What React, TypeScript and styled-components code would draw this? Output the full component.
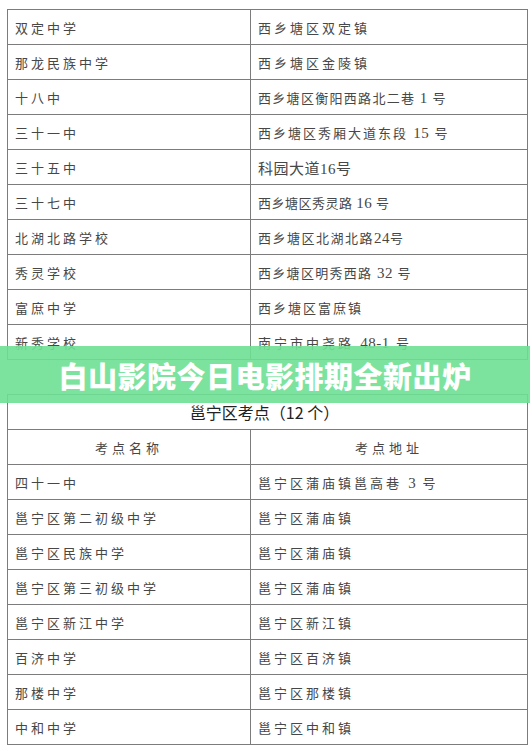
import React from 'react'
import styled, { createGlobalStyle } from 'styled-components'

const GlobalStyle = createGlobalStyle`
  html, body {
    margin: 0;
    padding: 0;
    background: #fff;
  }
`

type Row = { name: string; addr: string; sp?: number; size?: number }

const xixiangtang: Row[] = [
  { name: '双定中学', addr: '西乡塘区双定镇', sp: 3 },
  { name: '那龙民族中学', addr: '西乡塘区金陵镇', sp: 3 },
  { name: '十八中', addr: '西乡塘区衡阳西路北二巷 1 号', sp: 1.3 },
  { name: '三十一中', addr: '西乡塘区秀厢大道东段 15 号', sp: 2 },
  { name: '三十五中', addr: '科园大道16号', sp: 0.5, size: 15 },
  { name: '三十七中', addr: '西乡塘区秀灵路 16 号', sp: 0.5 },
  { name: '北湖北路学校', addr: '西乡塘区北湖北路24号', sp: 1.5 },
  { name: '秀灵学校', addr: '西乡塘区明秀西路 32 号', sp: 1.3 },
  { name: '富庶中学', addr: '西乡塘区富庶镇', sp: 2 },
  { name: '新秀学校', addr: '南宁市中尧路 48-1 号', sp: 3 },
]

const yongning: Row[] = [
  { name: '四十一中', addr: '邕宁区蒲庙镇邕高巷 3 号', sp: 3 },
  { name: '邕宁区第二初级中学', addr: '邕宁区蒲庙镇', sp: 3 },
  { name: '邕宁区民族中学', addr: '邕宁区蒲庙镇', sp: 3 },
  { name: '邕宁区第三初级中学', addr: '邕宁区蒲庙镇', sp: 3 },
  { name: '邕宁区新江中学', addr: '邕宁区新江镇', sp: 3 },
  { name: '百济中学', addr: '邕宁区百济镇', sp: 3 },
  { name: '那楼中学', addr: '邕宁区那楼镇', sp: 3 },
  { name: '中和中学', addr: '邕宁区中和镇', sp: 3 },
]

// digits in the source are set in a larger roman face than the CJK text
const withNumbers = (text: string) =>
  text.split(/([0-9][0-9-]*)/).map((part, i) =>
    /^[0-9]/.test(part) ? <Num key={i}>{part}</Num> : part
  )

export default function App() {
  return (
    <Page>
      <GlobalStyle />
      <Sheet>
        <colgroup>
          <col style={{ width: 243 }} />
          <col style={{ width: 277 }} />
        </colgroup>
        <tbody>
          {xixiangtang.map((r) => (
            <tr key={r.name}>
              <Cell spacing={3}>{r.name}</Cell>
              <Cell spacing={r.sp ?? 2} size={r.size}>
                {withNumbers(r.addr)}
              </Cell>
            </tr>
          ))}
        </tbody>
      </Sheet>

      <Sheet second>
        <colgroup>
          <col style={{ width: 243 }} />
          <col style={{ width: 277 }} />
        </colgroup>
        <tbody>
          <tr>
            <Title colSpan={2}>邕宁区考点（12 个）</Title>
          </tr>
          <tr>
            <HeadCell>考点名称</HeadCell>
            <HeadCell>考点地址</HeadCell>
          </tr>
          {yongning.map((r) => (
            <tr key={r.name}>
              <Cell spacing={3}>{r.name}</Cell>
              <Cell spacing={r.sp ?? 3}>{withNumbers(r.addr)}</Cell>
            </tr>
          ))}
        </tbody>
      </Sheet>

      <Banner>白山影院今日电影排期全新出炉</Banner>
    </Page>
  )
}

const Page = styled.div`
  position: relative;
  width: 530px;
  height: 750px;
  overflow: hidden;
  padding: 9px 0 0 7px;
  box-sizing: border-box;
  background: #fff;
`

const Sheet = styled.table<{ second?: boolean }>`
  width: 521px;
  table-layout: fixed;
  border-collapse: collapse;
  margin-top: ${({ second }) => (second ? '34px' : '0')};

  td {
    border: 1px solid #7c7c7c;
    height: 35px;
    padding: 0;
    box-sizing: border-box;
  }
`

const Cell = styled.td<{ spacing: number; size?: number }>`
  font-family: 'Liberation Serif', 'Noto Sans CJK SC', serif;
  font-size: ${({ size }) => size ?? 13}px;
  letter-spacing: ${({ spacing }) => spacing}px;
  color: #474747;
  padding-left: 7px !important;
  white-space: nowrap;
  vertical-align: middle;
`

const Num = styled.span`
  font-family: 'Liberation Serif', serif;
  font-size: 15px;
  letter-spacing: 0.5px;
`

const Title = styled.td`
  font-family: 'Noto Sans CJK SC', sans-serif;
  font-size: 16px;
  color: #222;
  text-align: center;
  vertical-align: middle;
  padding-right: 6px !important;
`

const HeadCell = styled.td`
  font-family: 'Liberation Serif', 'Noto Sans CJK SC', serif;
  font-size: 13px;
  letter-spacing: 4px;
  color: #474747;
  text-align: center;
  vertical-align: middle;
`

const Banner = styled.div`
  position: absolute;
  left: 0;
  right: 0;
  top: 346px;
  height: 57px;
  background: rgba(110, 224, 148, 0.9);
  display: flex;
  align-items: center;
  justify-content: center;
  font-family: 'Noto Sans CJK SC', sans-serif;
  font-weight: 900;
  font-size: 29px;
  color: #fff;
  letter-spacing: 0.5px;
`
